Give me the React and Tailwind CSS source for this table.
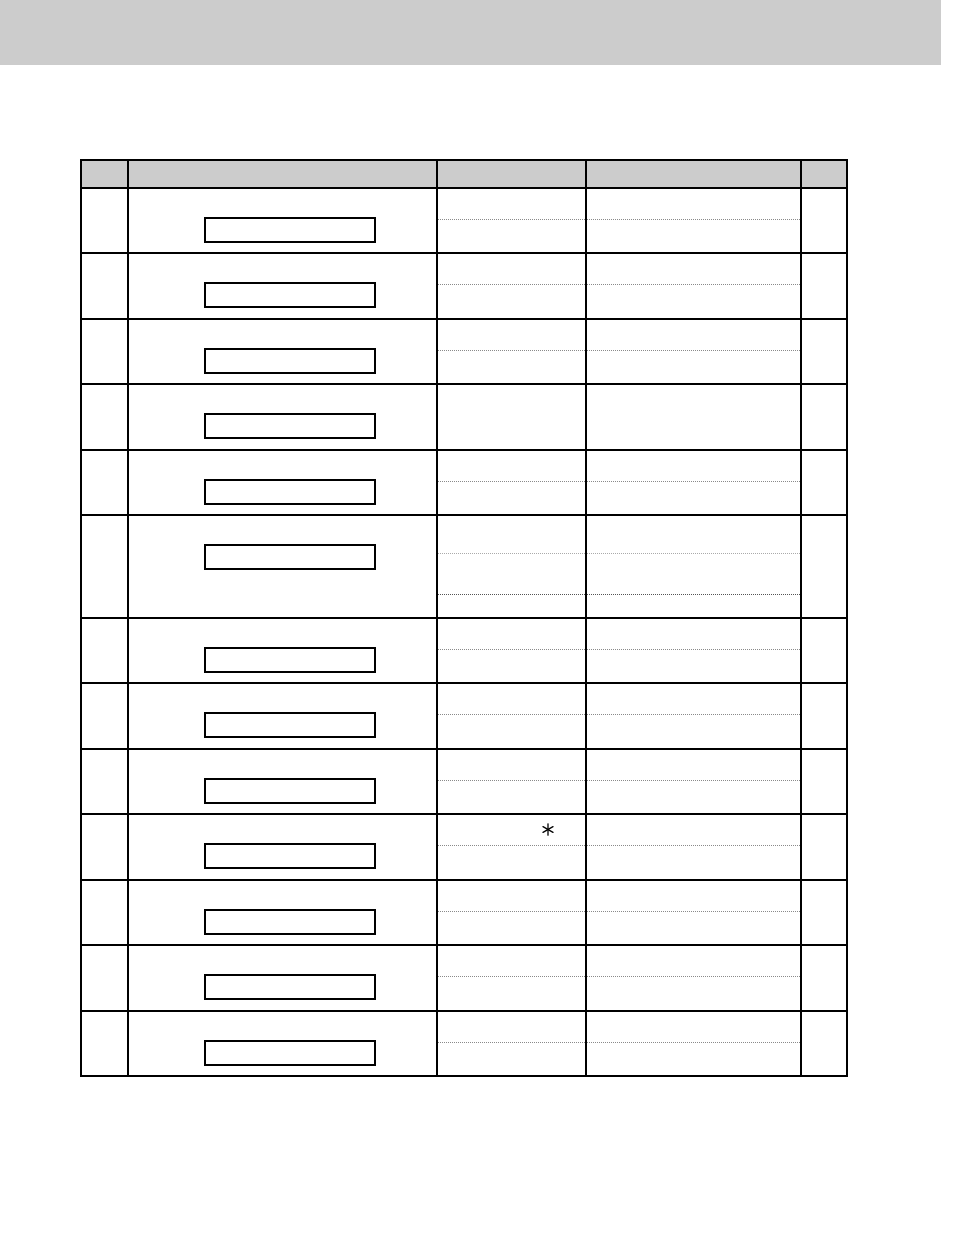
const rows = [
  { h: "h-[65px]", split: [31] },
  { h: "h-[66px]", split: [31] },
  { h: "h-[65px]", split: [31] },
  { h: "h-[66px]", split: [] },
  { h: "h-[65px]", split: [31] },
  { h: "h-[103px]", split: [38, 41], tall: true },
  { h: "h-[65px]", split: [31] },
  { h: "h-[66px]", split: [31] },
  { h: "h-[65px]", split: [31] },
  { h: "h-[66px]", split: [31], star: true },
  { h: "h-[65px]", split: [31] },
  { h: "h-[66px]", split: [31] },
  { h: "h-[63px]", split: [31], last: true },
];

function Asterisk() {
  return (
    <svg width="12" height="13" viewBox="0 0 12 13" className="text-black">
      <g stroke="currentColor" strokeWidth="1.3" strokeLinecap="round">
        <line x1="6" y1="0.8" x2="6" y2="12.2" />
        <line x1="1" y1="3.6" x2="11" y2="9.4" />
        <line x1="11" y1="3.6" x2="1" y2="9.4" />
      </g>
    </svg>
  );
}

function SplitCell({ row, width, withStar }) {
  if (row.tall) {
    return (
      <div className={`${width} shrink-0 border-l-2 border-black flex flex-col`}>
        <div className="h-[38px] border-b border-dotted border-[#aaaaaa]" />
        <div className="h-[41px] border-b border-dotted border-[#555555]" />
        <div className="flex-1" />
      </div>
    );
  }
  if (row.split.length === 0) {
    return <div className={`${width} shrink-0 border-l-2 border-black`} />;
  }
  return (
    <div className={`${width} shrink-0 border-l-2 border-black flex flex-col`}>
      <div className="h-[31px] border-b border-dotted border-[#8a8a8a] flex items-start">
        {withStar && (
          <span className="ml-[104px] mt-[8px] block leading-none">
            <Asterisk />
          </span>
        )}
      </div>
      <div className="flex-1" />
    </div>
  );
}

export default function App() {
  return (
    <div className="w-[954px] min-h-[1235px] bg-white" style={{ fontFamily: '"Liberation Sans", Arial, sans-serif' }}>
      <div className="w-[941px] h-[65px] bg-[#cccccc]" />

      <div className="ml-[80px] mt-[94px] w-[768px] border-2 border-black">
        {/* header */}
        <div className="flex h-[28px] border-b-2 border-black bg-[#cccccc]">
          <div className="w-[45px] shrink-0" />
          <div className="w-[309px] shrink-0 border-l-2 border-black" />
          <div className="w-[149px] shrink-0 border-l-2 border-black" />
          <div className="w-[215px] shrink-0 border-l-2 border-black" />
          <div className="flex-1 border-l-2 border-black" />
        </div>

        {rows.map((row, i) => (
          <div key={i} className={`flex ${row.h} ${row.last ? "" : "border-b-2 border-black"}`}>
            <div className="w-[45px] shrink-0" />
            <div className="w-[309px] shrink-0 border-l-2 border-black">
              <div className="ml-[75px] mt-[28px] w-[172px] h-[26px] border-2 border-black" />
            </div>
            <SplitCell row={row} width="w-[149px]" withStar={row.star} />
            <SplitCell row={row} width="w-[215px]" />
            <div className="flex-1 border-l-2 border-black" />
          </div>
        ))}
      </div>
    </div>
  );
}
